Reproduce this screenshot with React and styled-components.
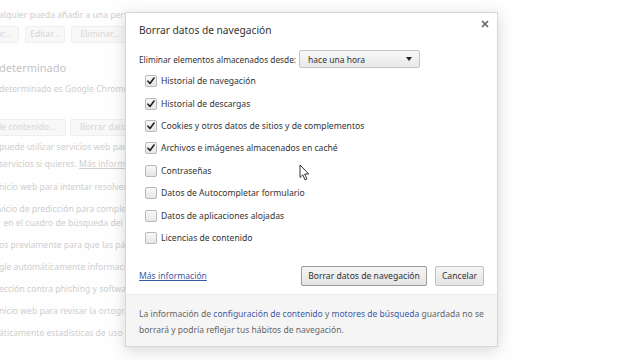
import React from "react";
import styled, { createGlobalStyle } from "styled-components";

const Global = createGlobalStyle`
  html, body { margin: 0; padding: 0; background: #fff; }
  body { width: 640px; height: 360px; overflow: hidden; font-family: "Noto Sans", "Open Sans", sans-serif; }
`;

const Page = styled.div`
  position: relative;
  width: 640px;
  height: 360px;
  overflow: hidden;
  background: #fefefe;
`;

const Behind = styled.div`
  display: flex;
  flex-direction: column;
  margin-left: ${p => p.$shift}px;
  padding-top: 7px;
  white-space: nowrap;
`;

const BgLine = styled.div`
  height: ${p => p.$h || 22}px;
  line-height: ${p => p.$h || 22}px;
  margin-top: ${p => p.$mt || 0}px;
  font-size: ${p => p.$size || 8.6}px;
  color: ${p => p.$size ? "#c4c4c4" : "#cecece"};
`;

const BgLink = styled.span`
  text-decoration: underline;
`;

const BgButtons = styled.div`
  display: flex;
  gap: ${p => p.$gap || 6}px;
  height: 17px;
  margin-top: ${p => p.$mt}px;
  margin-left: ${p => p.$x || 0}px;
`;

const BgButton = styled.div`
  border: 1px solid #efefef;
  border-radius: 2px;
  background: #f8f8f8;
  padding: 0 ${p => p.$pad || 8}px;
  line-height: 15px;
  font-size: 8.6px;
  color: #d6d6d6;
`;

const Dialog = styled.div`
  position: absolute;
  left: 125px;
  top: 12px;
  width: 373px;
  height: 335px;
  background: #fff;
  border: 1px solid #d6d6d6;
  box-sizing: border-box;
  box-shadow: 0 3px 14px rgba(0,0,0,0.16);
  display: flex;
  flex-direction: column;
  color: #333;
`;

const Body = styled.div`
  flex: 1;
  display: flex;
  flex-direction: column;
  padding: 9px 13px 0 13px;
`;

const TitleRow = styled.div`
  display: flex;
  justify-content: space-between;
  align-items: center;
  height: 16px;
`;

const Title = styled.div`
  font-size: 10.2px;
  color: #333;
`;

const Close = styled.div`
  width: 10px;
  height: 10px;
  margin-top: -12px;
  margin-right: -6px;
  display: flex;
  align-items: center;
  justify-content: center;
`;

const RangeRow = styled.div`
  display: flex;
  align-items: center;
  gap: 3px;
  margin-top: 12px;
  font-size: 8.3px;
`;

const Select = styled.div`
  width: 121px;
  height: 18px;
  box-sizing: border-box;
  border: 1px solid #c4c4c4;
  border-radius: 2px;
  background: linear-gradient(#f7f7f7, #e9e9e9);
  display: flex;
  align-items: center;
  justify-content: space-between;
  padding: 0 7px 0 8px;
  font-size: 8.5px;
  color: #333;
`;

const Caret = styled.div`
  width: 0;
  height: 0;
  border-left: 3.5px solid transparent;
  border-right: 3.5px solid transparent;
  border-top: 4px solid #222;
`;

const List = styled.div`
  display: flex;
  flex-direction: column;
  margin-top: 2px;
  padding-left: 6px;
`;

const Item = styled.div`
  display: flex;
  align-items: center;
  gap: 4px;
  height: 22.4px;
  font-size: 8.6px;
  color: #333;
`;

const Box = styled.div`
  width: 10px;
  height: 10px;
  border: 1px solid #b8b8b8;
  border-radius: 2px;
  background: linear-gradient(#f8f8f8, #e6e6e6);
  display: flex;
  align-items: center;
  justify-content: center;
`;

const Actions = styled.div`
  display: flex;
  align-items: center;
  margin-top: auto;
  margin-bottom: 8px;
`;

const Link = styled.span`
  color: #3a58a8;
  text-decoration: underline;
  font-size: 8.6px;
`;

const Spacer = styled.div`
  flex: 1;
`;

const Button = styled.div`
  height: 20px;
  box-sizing: border-box;
  border: 1px solid ${p => p.$primary ? "#9a9a9a" : "#c0c0c0"};
  border-radius: 2px;
  background: linear-gradient(#f5f5f5, #e4e4e4);
  width: ${p => p.$w}px;
  margin-left: ${p => p.$ml || 0}px;
  display: flex;
  align-items: center;
  justify-content: center;
  font-size: 8.6px;
  color: #333;
`;

const Footer = styled.div`
  height: 52px;
  background: #f5f5f5;
  border-top: 1px solid #ececec;
  padding: 11px 13px 0 13px;
  box-sizing: border-box;
  font-size: 8.5px;
  line-height: 16px;
  color: #666;
`;

const FLink = styled.span`
  color: #3f5aa6;
`;

const Cursor = styled.svg`
  position: absolute;
  left: 299px;
  top: 164px;
`;

const items = [
  ["Historial de navegación", true],
  ["Historial de descargas", true],
  ["Cookies y otros datos de sitios y de complementos", true],
  ["Archivos e imágenes almacenados en caché", true],
  ["Contraseñas", false],
  ["Datos de Autocompletar formulario", false],
  ["Datos de aplicaciones alojadas", false],
  ["Licencias de contenido", false],
];

function Check() {
  return (
    <svg width="8" height="8" viewBox="0 0 8 8">
      <path d="M1 4.2 L3 6.5 L7 1" fill="none" stroke="#222" strokeWidth="1.6" strokeLinecap="round" strokeLinejoin="round" />
    </svg>
  );
}

export default function App() {
  return (
    <Page>
      <Global />
      <Behind $shift={-1}>
        <BgLine $h={16}>alquier pueda añadir a una persona</BgLine>
        <BgButtons $mt={3} $x={-30}>
          <BgButton $pad={8}>Añadir...</BgButton>
          <BgButton $pad={4}>Editar...</BgButton>
          <BgButton $pad={9}>Eliminar...</BgButton>
        </BgButtons>
        <BgLine $h={22} $size={11} $mt={14}>determinado</BgLine>
        <BgLine $h={20}>determinado es Google Chrome</BgLine>
        <BgButtons $mt={20} $x={-13} $gap={4}>
          <BgButton $pad={9}>de contenido...</BgButton>
          <BgButton $pad={9}>Borrar datos de navegación...</BgButton>
        </BgButtons>
        <BgLine $h={17} $mt={3}>puede utilizar servicios web para</BgLine>
        <BgLine $h={17}>servicios si quieres. <BgLink>Más información</BgLink></BgLine>
        <BgLine $h={22} $mt={3}>nicio web para intentar resolver</BgLine>
        <BgLine $h={14} $mt={4}>vicio de predicción para completar</BgLine>
        <BgLine $h={14}>&nbsp; en el cuadro de búsqueda del</BgLine>
        <BgLine $h={22} $mt={4}>os previamente para que las páginas</BgLine>
        <BgLine $h={22}>gle automáticamente información</BgLine>
        <BgLine $h={22}>ección contra phishing y software</BgLine>
        <BgLine $h={22}>nicio web para revisar la ortografía</BgLine>
        <BgLine $h={22}>áticamente estadísticas de uso e</BgLine>
      </Behind>

      <Dialog>
        <Body>
          <TitleRow>
            <Title>Borrar datos de navegación</Title>
            <Close>
              <svg width="8" height="8" viewBox="0 0 8 8">
                <path d="M1 1 L7 7 M7 1 L1 7" stroke="#666" strokeWidth="1.7" />
              </svg>
            </Close>
          </TitleRow>
          <RangeRow>
            <span>Eliminar elementos almacenados desde:</span>
            <Select>
              <span>hace una hora</span>
              <Caret />
            </Select>
          </RangeRow>
          <List>
            {items.map(([label, on]) => (
              <Item key={label}>
                <Box>{on && <Check />}</Box>
                <span>{label}</span>
              </Item>
            ))}
          </List>
          <Actions>
            <Link>Más información</Link>
            <Spacer />
            <Button $primary $w={126}>Borrar datos de navegación</Button>
            <Button $w={49} $ml={8}>Cancelar</Button>
          </Actions>
        </Body>
        <Footer>
          La información de <FLink>configuración de contenido</FLink> y <FLink>motores de búsqueda</FLink> guardada no se borrará y podría reflejar tus hábitos de navegación.
        </Footer>
      </Dialog>

      <Cursor width="11" height="17" viewBox="0 0 11 17">
        <path d="M1 1 L1 13.5 L3.8 10.8 L6 15.8 L7.9 15 L5.7 10 L9.8 10 Z" fill="#fff" stroke="#333" strokeWidth="1" strokeLinejoin="round" />
      </Cursor>
    </Page>
  );
}
